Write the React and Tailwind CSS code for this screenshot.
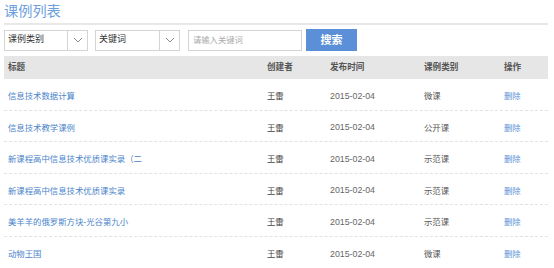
import React from "react";

const rows = [
  ["信息技术数据计算", "微课"],
  ["信息技术教学课例", "公开课"],
  ["新课程高中信息技术优质课实录（二", "示范课"],
  ["新课程高中信息技术优质课实录", "示范课"],
  ["美羊羊的俄罗斯方块-光谷第九小", "示范课"],
  ["动物王国", "微课"],
];

function Chevron() {
  return (
    <svg width="10" height="6" viewBox="0 0 10 6" fill="none">
      <path d="M1 1l4 4 4-4" stroke="#8a8a8a" strokeWidth="1" />
    </svg>
  );
}

function Select({ label, w, divider }) {
  return (
    <div
      className="flex h-[21px] items-stretch border border-[#d4d4d4] bg-white"
      style={{ width: w }}
    >
      <div className="flex flex-1 items-center pl-[3px] text-[9px] text-[#333]">{label}</div>
      <div
        className="flex items-center justify-center border-l border-[#d4d4d4]"
        style={{ width: divider }}
      >
        <Chevron />
      </div>
    </div>
  );
}

export default function App() {
  return (
    <div
      className="h-[268px] w-[554px] overflow-hidden bg-white px-[4px]"
      style={{ fontFamily: '"Liberation Sans", "Noto Sans CJK SC", sans-serif' }}
    >
      <div className="flex h-[23px] items-start pt-[2px] text-[14.2px] leading-[18px] text-[#6d9fde]">
        课例列表
      </div>
      <div className="h-[2px] w-[544px] bg-[#e8e8e8]" />
      <div className="mt-[4px] flex h-[22px] items-center">
        <Select label="课例类别" w={84} divider={20} />
        <div className="w-[7px]" />
        <Select label="关键词" w={85} divider={20} />
        <div className="w-[8px]" />
        <div className="flex h-[21px] w-[114px] items-center border border-[#d4d4d4] bg-white pl-[4px] text-[8.3px] text-[#aaa]">
          请输入关键词
        </div>
        <div className="w-[4px]" />
        <div className="flex h-[22px] w-[51px] items-center justify-center bg-[#5b8fd7] text-[11px] font-bold text-white">
          搜索
        </div>
      </div>
      <div className="mt-[5px] w-[544px]">
        <div className="grid h-[23px] grid-cols-[259px_63px_94px_80px_1fr] items-center bg-[#e6e6e6] pl-[4px] text-[8.6px] font-bold text-[#555]">
          <div>标题</div>
          <div>创建者</div>
          <div>发布时间</div>
          <div>课例类别</div>
          <div>操作</div>
        </div>
        {rows.map(([t, c], i) => (
          <div
            key={i}
            className={`grid h-[31.6px] grid-cols-[259px_63px_94px_80px_1fr] items-center pl-[4px] pt-[4px] text-[8.4px] ${
              i < rows.length - 1 ? "border-b border-dashed border-[#e2e2e2]" : ""
            }`}
          >
            <div className="text-[#4a84cc]">{t}</div>
            <div className="text-[#444]">王雷</div>
            <div className="text-[8.8px] text-[#666]">2015-02-04</div>
            <div className="text-[#555]">{c}</div>
            <div className="text-[#5a92d8]">删除</div>
          </div>
        ))}
      </div>
    </div>
  );
}
